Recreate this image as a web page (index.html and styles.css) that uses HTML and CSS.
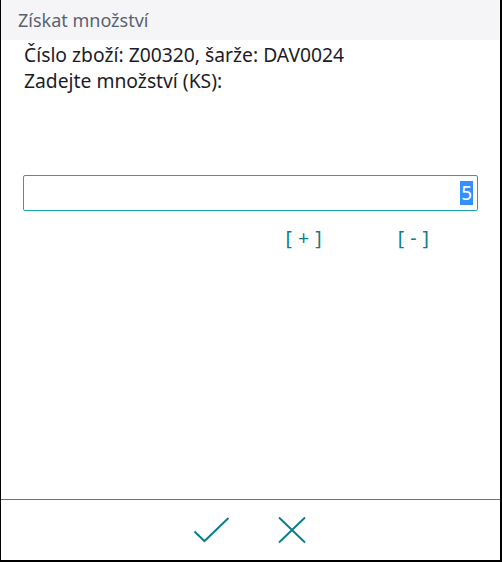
FILE: index.html
```html
<!DOCTYPE html>
<html lang="cs">
<head>
<meta charset="utf-8">
<link rel="stylesheet" href="styles.css">
</head>
<body>
<div class="window">
  <div class="header">Získat množství</div>
  <div class="content">
    <div class="text">Číslo zboží: Z00320, šarže: DAV0024</div>
    <div class="text">Zadejte množství (KS):</div>
    <div class="field"><span class="sel">5</span></div>
    <div class="steps">
      <span class="step">[ + ]</span>
      <span class="step">[ - ]</span>
    </div>
  </div>
  <div class="footer">
    <svg class="icon" width="38" height="28" viewBox="0 0 38 28">
      <path d="M1.5 15.5 L11.5 25 L35.5 2" fill="none" stroke="#0d7f8a" stroke-width="2"/>
    </svg>
    <svg class="icon" width="30" height="28" viewBox="0 0 30 28">
      <path d="M2 1.5 L28 26.5 M28 1.5 L2 26.5" fill="none" stroke="#0d7f8a" stroke-width="2"/>
    </svg>
  </div>
</div>
</body>
</html>
```
FILE: styles.css
```css
html, body {
  margin: 0;
  padding: 0;
  background: #fff;
}
.window {
  box-sizing: border-box;
  width: 502px;
  height: 562px;
  border-left: 1px solid #000;
  border-right: 2px solid #000;
  border-bottom: 2px solid #000;
  display: flex;
  flex-direction: column;
  font-family: "Noto Sans", "Open Sans", sans-serif;
}
.header {
  height: 40px;
  background: #f5f5f7;
  color: #5a6270;
  font-size: 18px;
  line-height: 40px;
  padding-left: 17px;
  flex: none;
}
.content {
  flex: 1;
  padding: 2px 22px 0 22px;
  color: #1c1c28;
}
.text {
  font-size: 19.3px;
  line-height: 26px;
  padding-left: 1px;
}
.field {
  margin-top: 81px;
  height: 34px;
  border: 1px solid #17a8b8;
  border-radius: 2px;
  display: flex;
  align-items: center;
  justify-content: flex-end;
  padding-right: 4px;
}
.sel {
  background: #3390ff;
  color: #fff;
  font-size: 19px;
  line-height: 24px;
  padding: 0 1px;
}
.steps {
  display: flex;
  justify-content: flex-end;
  gap: 76px;
  padding-right: 49px;
  margin-top: 15px;
}
.step {
  color: #0d7f8a;
  font-size: 19.5px;
  line-height: 24px;
  word-spacing: 1px;
}
.footer {
  flex: none;
  height: 60px;
  border-top: 1px solid #707070;
  display: flex;
  justify-content: center;
  align-items: center;
  gap: 46px;
  padding-right: 2px;
}
```
